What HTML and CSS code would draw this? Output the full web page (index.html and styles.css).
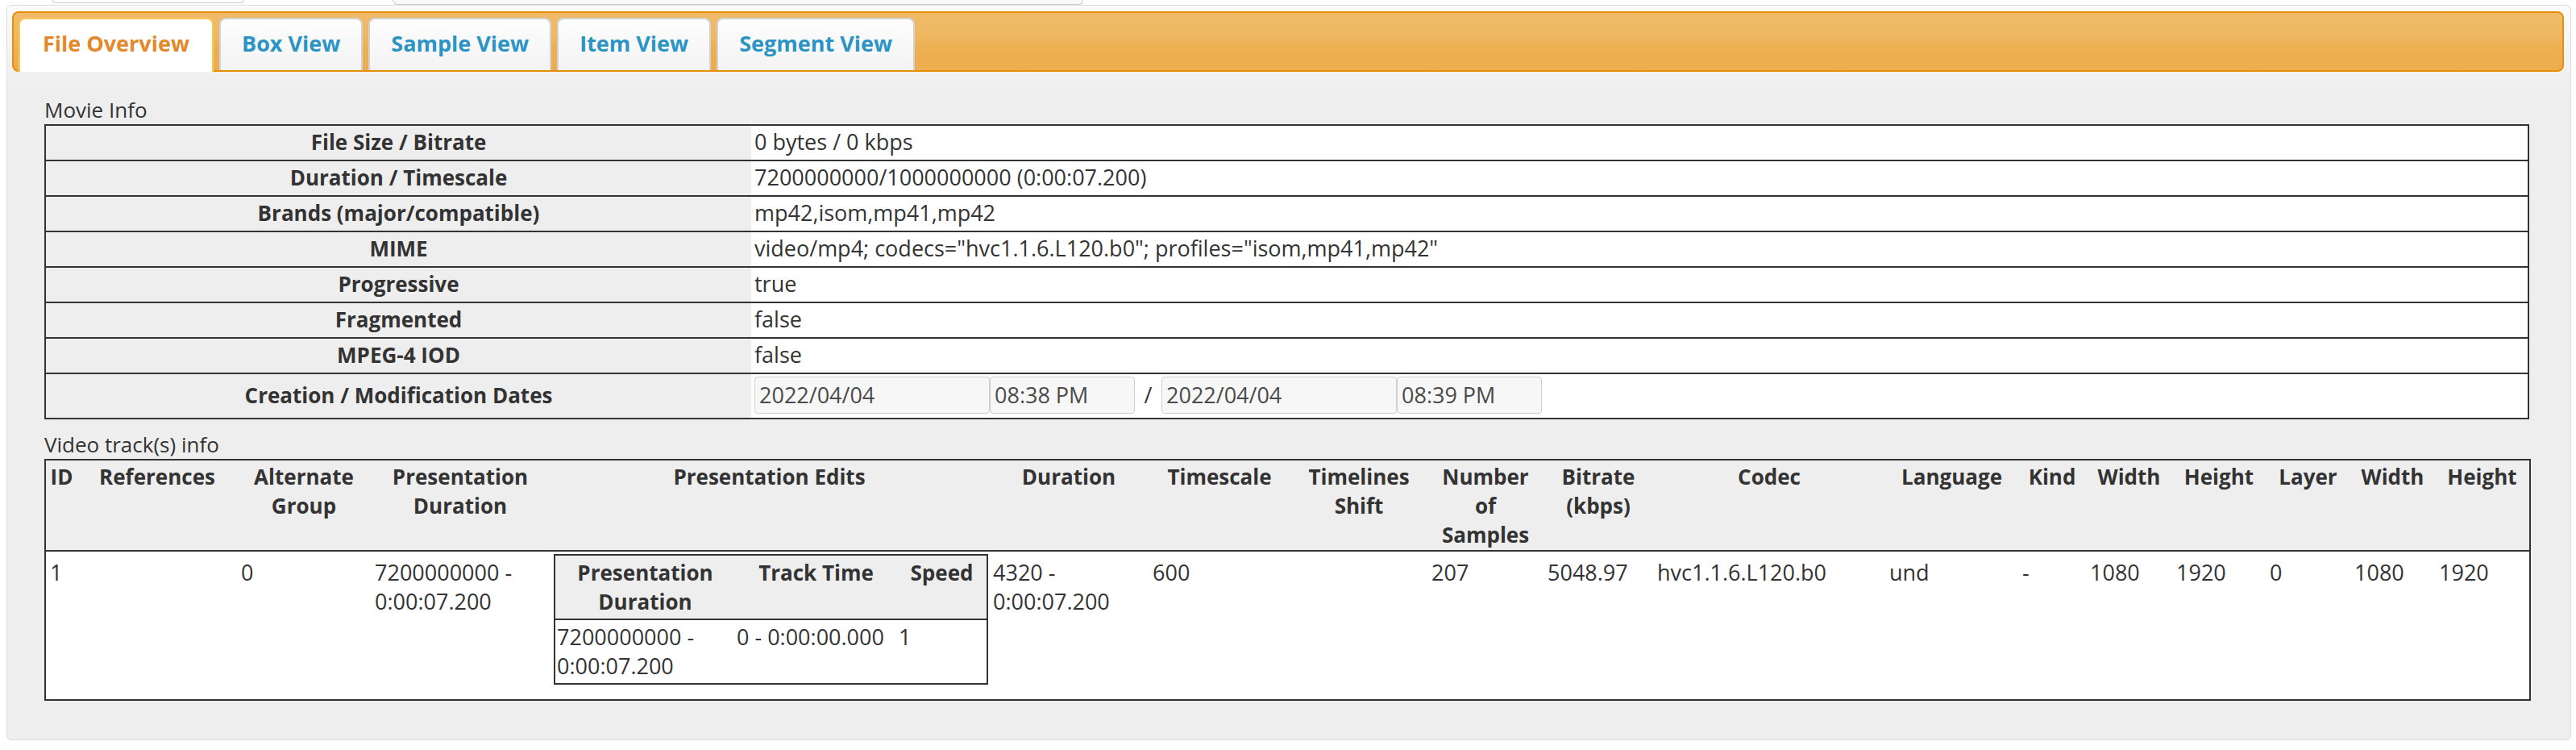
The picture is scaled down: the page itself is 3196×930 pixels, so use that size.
FILE: index.html
```html
<!DOCTYPE html>
<html lang="en">
<head>
<meta charset="utf-8">
<title>File Overview</title>
<link rel="stylesheet" href="styles.css">
</head>
<body>
<div class="topbar">
  <div class="topbox topbox-a"></div>
  <div class="topbox topbox-b"></div>
</div>
<div class="panel">
  <ul class="tabs">
    <li class="tab active">File Overview</li>
    <li class="tab">Box View</li>
    <li class="tab">Sample View</li>
    <li class="tab">Item View</li>
    <li class="tab">Segment View</li>
  </ul>
  <div class="content">
    <div class="caption">Movie Info</div>
    <table class="movie">
      <tr><th>File Size / Bitrate</th><td>0 bytes / 0 kbps</td></tr>
      <tr><th>Duration / Timescale</th><td>7200000000/1000000000 (0:00:07.200)</td></tr>
      <tr><th>Brands (major/compatible)</th><td>mp42,isom,mp41,mp42</td></tr>
      <tr><th>MIME</th><td>video/mp4; codecs="hvc1.1.6.L120.b0"; profiles="isom,mp41,mp42"</td></tr>
      <tr><th>Progressive</th><td>true</td></tr>
      <tr><th>Fragmented</th><td>false</td></tr>
      <tr><th>MPEG-4 IOD</th><td>false</td></tr>
      <tr class="dates-row"><th>Creation / Modification Dates</th>
        <td><div class="dates">
          <span class="field date">2022/04/04</span><span class="field time">08:38 PM</span><span class="sep">/</span><span class="field date">2022/04/04</span><span class="field time">08:39 PM</span>
        </div></td></tr>
    </table>

    <div class="caption video-caption">Video track(s) info</div>
    <table class="tracks">
      <colgroup>
        <col><col><col><col><col><col><col><col><col><col><col><col><col><col><col><col><col><col>
      </colgroup>
      <thead>
        <tr>
          <th>ID</th><th>References</th><th>Alternate Group</th><th>Presentation Duration</th><th>Presentation Edits</th><th>Duration</th><th>Timescale</th><th>Timelines Shift</th><th>Number of Samples</th><th>Bitrate (kbps)</th><th>Codec</th><th>Language</th><th>Kind</th><th>Width</th><th>Height</th><th>Layer</th><th>Width</th><th>Height</th>
        </tr>
      </thead>
      <tbody>
        <tr>
          <td>1</td><td></td><td>0</td><td>7200000000 - 0:00:07.200</td>
          <td class="edits-cell">
            <table class="edits">
              <colgroup><col><col><col></colgroup>
              <tr><th>Presentation Duration</th><th>Track Time</th><th>Speed</th></tr>
              <tr><td>7200000000 - 0:00:07.200</td><td class="nowrap">0 - 0:00:00.000</td><td>1</td></tr>
            </table>
          </td>
          <td>4320 - 0:00:07.200</td><td>600</td><td></td><td>207</td><td>5048.97</td><td>hvc1.1.6.L120.b0</td><td>und</td><td>-</td><td>1080</td><td>1920</td><td>0</td><td>1080</td><td>1920</td>
        </tr>
      </tbody>
    </table>
  </div>
</div>
</body>
</html>
```

FILE: styles.css
```css
html, body {
  margin: 0;
  padding: 0;
  background: #ffffff;
}

body {
  width: 3196px;
  font-family: "Open Sans", "Noto Sans", sans-serif;
  color: #333333;
}

/* cut-off controls above the panel */
.topbar {
  display: flex;
  align-items: flex-start;
  height: 6px;
}

.topbox {
  box-sizing: border-box;
  border: 1px solid #cccccc;
  border-top: 0;
  border-radius: 0 0 6px 6px;
}

.topbox-a {
  margin-left: 65px;
  width: 238px;
  height: 4px;
  background: #ffffff;
}

.topbox-b {
  margin-left: 184px;
  width: 857px;
  height: 6px;
  background: #f8f8f8;
}

/* main tabs panel */
.panel {
  margin: 0 6px 10px 8px;
  border: 1px solid #dddddd;
  border-radius: 6px;
  background: linear-gradient(180deg, #fbfbfb 0px, #f4f4f4 60px, #eeeeee 110px, #eeeeee 100%);
  padding: 7px 8px 48px 6px;
}

.tabs {
  list-style: none;
  margin: 0;
  display: flex;
  gap: 7px;
  padding: 6px 6px 0;
  border: 2px solid #e78f08;
  border-radius: 8px;
  background: linear-gradient(180deg, #f0bb68 0%, #efb761 42%, #edb155 56%, #ecae50 70%, #ecad4e 100%);
}

.tab {
  border: 2px solid #d2d2d2;
  border-bottom: 0;
  border-radius: 8px 8px 0 0;
  background: linear-gradient(180deg, #fdfdfd 0%, #f7f7f7 60%, #f3f3f3 100%);
  padding: 12px 26px 15px;
  font-size: 27px;
  line-height: 36px;
  font-weight: 700;
  color: #2b94c4;
  white-space: nowrap;
}

.tab.active {
  background: #ffffff;
  border-color: #f6c95a;
  color: #e4892a;
  margin-bottom: -2px;
  padding: 12px 28px 17px;
}

/* content */
.content {
  margin: 0 43px 0 40px;
}

.caption {
  font-size: 26px;
  line-height: 36px;
  color: #333333;
  margin-top: 29px;
}

.video-caption {
  margin-top: 13px;
}

.movie {
  width: 100%;
  border-collapse: collapse;
  border: 2px solid #333333;
}

.movie th {
  width: 867px;
  background: #eeeeee;
  font-size: 26px;
  line-height: 36px;
  font-weight: 700;
  text-align: center;
  padding: 2px 4px 4px;
  border-top: 2px solid #333333;
}

.movie td {
  background: #ffffff;
  font-size: 27px;
  line-height: 36px;
  padding: 2px 4px 4px;
  border-top: 2px solid #333333;
  white-space: nowrap;
}

.movie .dates-row td {
  padding: 3px 4px 5px;
}

.dates {
  display: flex;
  align-items: center;
}

.field {
  box-sizing: border-box;
  height: 46px;
  border: 1px solid #d0d0d0;
  border-radius: 4px;
  background: #f7f7f7;
  padding: 0 5px;
  font-size: 27px;
  line-height: 44px;
  color: #4a4a4a;
}

.field.date {
  width: 292px;
}

.field.time {
  width: 180px;
}

.sep {
  width: 33px;
  text-align: center;
  font-size: 27px;
  line-height: 44px;
}

/* video tracks table */
.tracks {
  width: 100%;
  table-layout: fixed;
  border-collapse: collapse;
  border: 2px solid #333333;
}

.tracks col:nth-child(1) { width: 40px; }
.tracks col:nth-child(2) { width: 198px; }
.tracks col:nth-child(3) { width: 166px; }
.tracks col:nth-child(4) { width: 222px; }
.tracks col:nth-child(5) { width: 545px; }
.tracks col:nth-child(6) { width: 198px; }
.tracks col:nth-child(7) { width: 176px; }
.tracks col:nth-child(8) { width: 170px; }
.tracks col:nth-child(9) { width: 144px; }
.tracks col:nth-child(10) { width: 136px; }
.tracks col:nth-child(11) { width: 288px; }
.tracks col:nth-child(12) { width: 165px; }
.tracks col:nth-child(13) { width: 84px; }
.tracks col:nth-child(14) { width: 107px; }
.tracks col:nth-child(15) { width: 116px; }
.tracks col:nth-child(16) { width: 105px; }
.tracks col:nth-child(17) { width: 105px; }
.tracks col:nth-child(18) { width: 118px; }

.tracks > thead > tr > th {
  background: #eeeeee;
  font-size: 26px;
  line-height: 36px;
  font-weight: 700;
  text-align: center;
  vertical-align: baseline;
  padding: 2px 4px 1px;
  border-bottom: 2px solid #333333;
}

.tracks > tbody > tr > td {
  background: #ffffff;
  font-size: 27px;
  line-height: 36px;
  text-align: left;
  vertical-align: baseline;
  padding: 3px 4px 0 5px;
}

.tracks > tbody > tr > td.edits-cell {
  padding: 3px 3px 0 5px;
}

.edits {
  width: 100%;
  table-layout: fixed;
  border-collapse: collapse;
  border: 2px solid #333333;
  margin-bottom: 18px;
}

.edits col:nth-child(1) { width: 224px; }
.edits col:nth-child(2) { width: 201px; }
.edits col:nth-child(3) { width: 112px; }

.edits th {
  background: #eeeeee;
  font-size: 26px;
  line-height: 36px;
  font-weight: 700;
  text-align: center;
  vertical-align: baseline;
  padding: 3px 2px;
  border-bottom: 2px solid #333333;
}

.edits td {
  background: #ffffff;
  font-size: 27px;
  line-height: 36px;
  text-align: left;
  vertical-align: baseline;
  padding: 3px 2px;
}

.edits td.nowrap {
  white-space: nowrap;
}
```
